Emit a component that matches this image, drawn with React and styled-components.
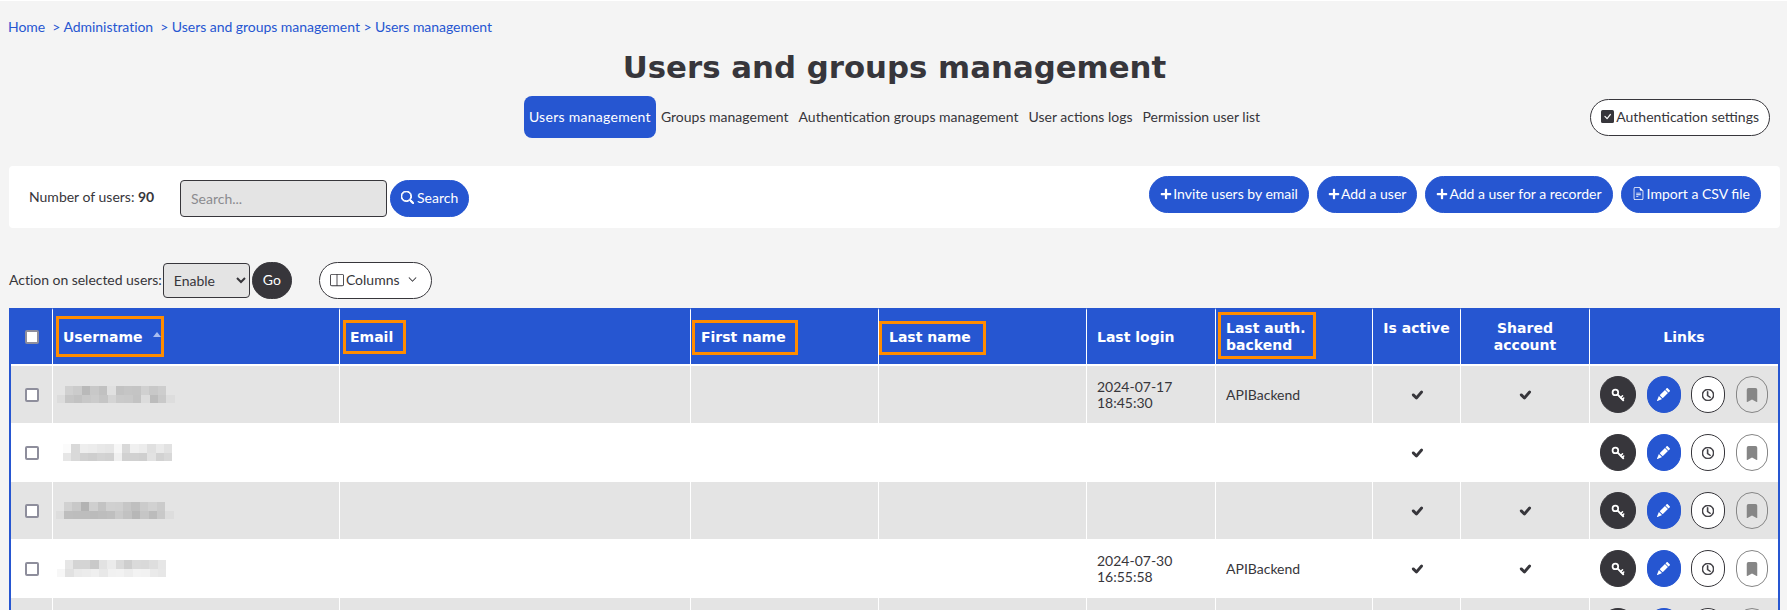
import React from "react";
import styled, { createGlobalStyle } from "styled-components";
import {
  BsCheckSquareFill,
  BsSearch,
  BsFileEarmarkText,
  BsLayoutSplit,
  BsChevronDown,
  BsPencilFill,
  BsClock,
  BsBookmarkFill,
  BsCheckLg,
} from "react-icons/bs";
import { FaPlus } from "react-icons/fa";

const BLUE = "#2656d1";
const DARK = "#37363b";

const GlobalStyle = createGlobalStyle`
  html, body {
    margin: 0;
    height: 100%;
    overflow: hidden;
    background: #f4f4f4;
  }
  body {
    font-family: Lato, "Open Sans", sans-serif;
    font-size: 14px;
    color: ${DARK};
  }
`;

const Page = styled.div`
  border-top: 1px solid #fff;
  padding: 0 7px 0 9px;
`;

const Breadcrumb = styled.nav`
  display: flex;
  height: 16px;
  padding-top: 18px;
  margin-left: -1px;
  line-height: 16px;
  letter-spacing: -0.04px;
  color: ${BLUE};
  white-space: pre;
`;

const Title = styled.h1`
  margin: 10px 0 0;
  height: 45px;
  line-height: 45px;
  text-align: center;
  font-family: "DejaVu Sans", sans-serif;
  font-size: 30.8px;
  font-weight: 700;
  color: ${DARK};
`;

const NavRow = styled.div`
  display: grid;
  grid-template-columns: 1fr auto 1fr;
  align-items: center;
  height: 42px;
  margin-top: 6px;
`;

const Tabs = styled.div`
  display: flex;
  grid-column: 2;
  height: 42px;
`;

const Tab = styled.a`
  display: flex;
  align-items: center;
  padding: 0 5px 2px;
  border-radius: 8px;
  background: ${(p) => (p.$active ? BLUE : "transparent")};
  color: ${(p) => (p.$active ? "#fff" : DARK)};
  letter-spacing: ${(p) => (p.$active ? "0.28px" : "0")};
  white-space: nowrap;
`;

const PillButton = styled.button`
  display: inline-flex;
  align-items: center;
  gap: 2px;
  height: 37px;
  padding: 0 10px 2px;
  border: 1px solid ${(p) => (p.$outline ? DARK : BLUE)};
  border-radius: 20px;
  background: ${(p) => (p.$outline ? "#fff" : BLUE)};
  color: ${(p) => (p.$outline ? DARK : "#fff")};
  font: inherit;
  white-space: nowrap;
`;

const AuthButton = styled(PillButton)`
  justify-self: end;
  margin-right: 10px;
`;

const SearchPanel = styled.section`
  display: flex;
  justify-content: space-between;
  height: 62px;
  margin-top: 28px;
  border-radius: 4px;
  background: #fff;
`;

const SearchForm = styled.form`
  display: flex;
  align-items: center;
  padding: 2px 0 0 20px;
`;

const UserCount = styled.span`
  width: 151px;
  margin-top: -3px;
`;

const SearchInput = styled.input`
  box-sizing: border-box;
  width: 207px;
  height: 37px;
  margin-right: 3px;
  padding: 0 10px;
  border: 1px solid ${DARK};
  border-radius: 4px;
  background: #e4e4e4;
  font: inherit;
  &::placeholder {
    color: #8b8b8f;
  }
`;

const SearchIcon = styled(BsSearch)`
  margin-right: 1px;
  font-size: 13px;
  stroke: currentColor;
  stroke-width: 1.2px;
`;

const PlusIcon = styled(FaPlus)`
  margin-right: -1px;
  font-size: 12px;
`;

const Actions = styled.div`
  display: flex;
  gap: 8px;
  padding: 10px 19px 0 0;
`;

const ActionRow = styled.div`
  display: flex;
  align-items: center;
  height: 37px;
  margin-top: 34px;
`;

const ActionLabel = styled.label`
  margin-top: -2px;
  margin-right: 1px;
  letter-spacing: -0.03px;
  white-space: nowrap;
`;

const ActionSelect = styled.select`
  box-sizing: border-box;
  width: 87px;
  height: 35px;
  margin-right: 2px;
  padding: 0 6px;
  border: 1px solid ${DARK};
  border-radius: 4px;
  background-color: #e4e4e4;
  color: ${DARK};
  font: inherit;
`;

const GoButton = styled(PillButton)`
  border-color: ${DARK};
  background: ${DARK};
  margin-right: 27px;
`;

const ColumnsButton = styled(PillButton)`
  padding-right: 14px;
`;

const ColumnsCaret = styled(BsChevronDown)`
  margin-left: 6px;
  font-size: 9px;
  stroke: currentColor;
  stroke-width: 0.6px;
`;

const Table = styled.table`
  width: 1771px;
  margin-top: 9px;
  table-layout: fixed;
  border-collapse: separate;
  border-spacing: 0;
  border: 2px solid ${BLUE};
  border-top: 0;
  border-bottom: 0;
`;

const HeadRow = styled.tr`
  height: 58px;
`;

const HeadCell = styled.th`
  position: relative;
  box-sizing: border-box;
  padding: ${(p) => (p.$top ? "10px 10px 0" : "0 10px")};
  border-left: ${(p) => (p.$first ? 0 : "1px solid #fff")};
  border-top: 2px solid ${BLUE};
  border-bottom: 2px solid #fff;
  background: ${BLUE};
  background-clip: padding-box;
  color: #fff;
  font-family: "DejaVu Sans", sans-serif;
  font-size: 14px;
  font-weight: 700;
  line-height: 17px;
  text-align: ${(p) => (p.$center ? "center" : "left")};
  vertical-align: ${(p) => (p.$top ? "top" : "middle")};
`;

// orange annotation frames drawn over the header cells
const Frame = styled.span`
  position: absolute;
  left: ${(p) => p.$left}px;
  top: ${(p) => p.$top}px;
  box-sizing: border-box;
  width: ${(p) => p.$w}px;
  height: ${(p) => p.$h}px;
  border: 3px solid #ff8c00;
`;

const SortCaret = styled.span`
  position: absolute;
  left: 100px;
  top: 22px;
  border-left: 4px solid transparent;
  border-right: 4px solid transparent;
  border-bottom: 5px solid #a9bdf0;
`;

const Row = styled.tr`
  height: 58px;
  background: ${(p) => (p.$odd ? "#e4e4e4" : "#fff")};
`;

const Cell = styled.td`
  box-sizing: border-box;
  padding: 0 10px;
  border-left: ${(p) => (p.$first ? 0 : "1px solid #fff")};
  border-bottom: 1px solid #fff;
  line-height: 16px;
  text-align: ${(p) => (p.$center ? "center" : "left")};
  vertical-align: middle;
`;

const CheckCell = styled(Cell)`
  padding: 0 0 0 14px;
`;

const HeadCheckCell = styled(HeadCell)`
  padding: 0 0 0 14px;
`;

const Checkbox = styled.span`
  display: block;
  box-sizing: border-box;
  width: 14px;
  height: 14px;
  border: 2px solid #8e8e9c;
  border-radius: 2px;
  background: #fff;
`;

const Blurred = styled.div`
  display: flex;
  flex-direction: column;
  margin-left: -10px;
`;

const BlurLine = styled.div`
  display: flex;
  margin-left: ${(p) => p.$indent}px;
  height: 8.5px;
`;

const BlurBlock = styled.i`
  display: block;
  width: 8.43px;
`;

const Tick = styled(BsCheckLg)`
  display: block;
  margin: 0 auto;
  font-size: 14px;
  stroke: ${DARK};
  stroke-width: 1.8px;
`;

const LinksRow = styled.div`
  display: flex;
  gap: 10.66px;
`;

const RoundLink = styled.a`
  display: flex;
  align-items: center;
  justify-content: center;
  box-sizing: border-box;
  width: ${(p) => p.$w}px;
  height: 37px;
  border: 1px solid ${(p) => p.$border};
  border-radius: 20px;
  background: ${(p) => p.$bg};
  color: ${(p) => p.$fg};
  font-size: 13px;
`;

const ClockIcon = styled(BsClock)`
  font-size: 12px;
  stroke: currentColor;
  stroke-width: 1px;
`;

const MarkIcon = styled(BsBookmarkFill)`
  font-size: 14px;
`;

const KeyIcon = () => (
  <svg width="14" height="14" viewBox="0 0 16 16" fill="none" stroke="currentColor" strokeLinecap="round">
    <circle cx="5" cy="5" r="3.2" strokeWidth="2" />
    <path d="M7.6 7.6 14 14" strokeWidth="2.2" />
    <path d="M11 11l2.2-2.2M13 13l1.6-1.6" strokeWidth="1.7" />
  </svg>
);

const columns = [41, 287, 351, 188, 208, 129, 157, 88, 129, 189];

const blurs = [
  {
    top: { indent: 65, tones: ["d0", "cb", "b9", "c8", "c1", "e0", "c2", "c5", "c4", "d0", "c8", "cd"] },
    bottom: { indent: 57, tones: ["dc", "c6", "c2", "c8", "cb", "c5", "d4", "ca", "c9", "c3", "dc", "bc", "c9", "dd"] },
  },
  {
    top: { indent: 63, tones: ["fb", "d9", "ee", "ec", "e8", "e6", "f7", "d9", "f0", "ec", "e0", "ea", "e2"] },
    bottom: { indent: 63, tones: ["e6", "d9", "d1", "ce", "d3", "d1", "f0", "d1", "d1", "cf", "e2", "d2", "d8"] },
  },
  {
    top: { indent: 64, tones: ["d1", "c8", "b3", "cf", "c3", "d0", "cf", "c6", "bf", "cb", "d1", "cb"] },
    bottom: { indent: 56, tones: ["dd", "be", "bd", "bd", "bb", "bd", "bf", "ca", "c2", "b7", "c6", "bc", "c9", "dd"] },
  },
  {
    top: { indent: 65, tones: ["e6", "d4", "d4", "c9", "e2", "eb", "da", "ce", "da", "d9", "de", "e6"] },
    bottom: { indent: 57, tones: ["f7", "e1", "ea", "ec", "ef", "e8", "f1", "f2", "ed", "f3", "f2", "ea", "e7"] },
  },
];

const users = [
  { blur: blurs[0], login: ["2024-07-17", "18:45:30"], backend: "APIBackend", active: true, shared: true },
  { blur: blurs[1], active: true },
  { blur: blurs[2], active: true, shared: true },
  { blur: blurs[3], login: ["2024-07-30", "16:55:58"], backend: "APIBackend", active: true, shared: true },
  { active: true, shared: true },
];

const BlurredName = ({ blur }) => {
  if (!blur) return null;
  return (
    <Blurred>
      {[blur.top, blur.bottom].map((line, i) => (
        <BlurLine key={i} $indent={line.indent - 53}>
          {line.tones.map((t, j) => (
            <BlurBlock key={j} style={{ background: `#${t}${t}${t}` }} />
          ))}
        </BlurLine>
      ))}
    </Blurred>
  );
};

const App = () => {
  return (
    <Page>
      <GlobalStyle />
      <Breadcrumb>
        Home{"  "}&gt; Administration{"  "}&gt; Users and groups management &gt; Users management
      </Breadcrumb>
      <Title>Users and groups management</Title>

      <NavRow>
        <Tabs>
          <Tab $active>Users management</Tab>
          <Tab>Groups management</Tab>
          <Tab>Authentication groups management</Tab>
          <Tab>User actions logs</Tab>
          <Tab>Permission user list</Tab>
        </Tabs>
        <AuthButton $outline>
          <BsCheckSquareFill size={13} />
          Authentication settings
        </AuthButton>
      </NavRow>

      <SearchPanel>
        <SearchForm>
          <UserCount>
            Number of users: <b>90</b>
          </UserCount>
          <SearchInput placeholder="Search..." />
          <PillButton type="button">
            <SearchIcon />
            Search
          </PillButton>
        </SearchForm>
        <Actions>
          <PillButton>
            <PlusIcon />
            Invite users by email
          </PillButton>
          <PillButton>
            <PlusIcon />
            Add a user
          </PillButton>
          <PillButton>
            <PlusIcon />
            Add a user for a recorder
          </PillButton>
          <PillButton>
            <BsFileEarmarkText size={13} />
            Import a CSV file
          </PillButton>
        </Actions>
      </SearchPanel>

      <ActionRow>
        <ActionLabel>Action on selected users:</ActionLabel>
        <ActionSelect defaultValue="Enable">
          <option>Enable</option>
          <option>Disable</option>
        </ActionSelect>
        <GoButton>Go</GoButton>
        <ColumnsButton $outline>
          <BsLayoutSplit size={14} />
          Columns
          <ColumnsCaret />
        </ColumnsButton>
      </ActionRow>

      <Table>
        <colgroup>
          {columns.map((w, i) => (
            <col key={i} style={{ width: w }} />
          ))}
        </colgroup>
        <thead>
          <HeadRow>
            <HeadCheckCell $first>
              <Checkbox />
            </HeadCheckCell>
            <HeadCell>
              Username
              <SortCaret />
              <Frame $left={3} $top={6} $w={108} $h={41} />
            </HeadCell>
            <HeadCell>
              Email
              <Frame $left={3} $top={10} $w={63} $h={34} />
            </HeadCell>
            <HeadCell>
              First name
              <Frame $left={1} $top={10} $w={106} $h={35} />
            </HeadCell>
            <HeadCell>
              Last name
              <Frame $left={0} $top={11} $w={107} $h={34} />
            </HeadCell>
            <HeadCell>Last login</HeadCell>
            <HeadCell>
              Last auth.
              <br />
              backend
              <Frame $left={2} $top={2} $w={98} $h={47} />
            </HeadCell>
            <HeadCell $center $top>
              Is active
            </HeadCell>
            <HeadCell $center>
              Shared
              <br />
              account
            </HeadCell>
            <HeadCell $center>Links</HeadCell>
          </HeadRow>
        </thead>
        <tbody>
          {users.map((u, i) => (
            <Row key={i} $odd={i % 2 === 0}>
              <CheckCell $first>
                <Checkbox />
              </CheckCell>
              <Cell>
                <BlurredName blur={u.blur} />
              </Cell>
              <Cell />
              <Cell />
              <Cell />
              <Cell>
                {u.login && (
                  <>
                    {u.login[0]}
                    <br />
                    {u.login[1]}
                  </>
                )}
              </Cell>
              <Cell>{u.backend}</Cell>
              <Cell $center>{u.active && <Tick />}</Cell>
              <Cell $center>{u.shared && <Tick />}</Cell>
              <Cell>
                <LinksRow>
                  <RoundLink $w={36} $bg={DARK} $fg="#fff" $border={DARK}>
                    <KeyIcon />
                  </RoundLink>
                  <RoundLink $w={34} $bg={BLUE} $fg="#fff" $border={BLUE}>
                    <BsPencilFill />
                  </RoundLink>
                  <RoundLink $w={34} $bg="#fff" $fg={DARK} $border={DARK}>
                    <ClockIcon />
                  </RoundLink>
                  <RoundLink $w={32} $bg="transparent" $fg="#868686" $border="#868686">
                    <MarkIcon />
                  </RoundLink>
                </LinksRow>
              </Cell>
            </Row>
          ))}
        </tbody>
      </Table>
    </Page>
  );
};

export default App;
